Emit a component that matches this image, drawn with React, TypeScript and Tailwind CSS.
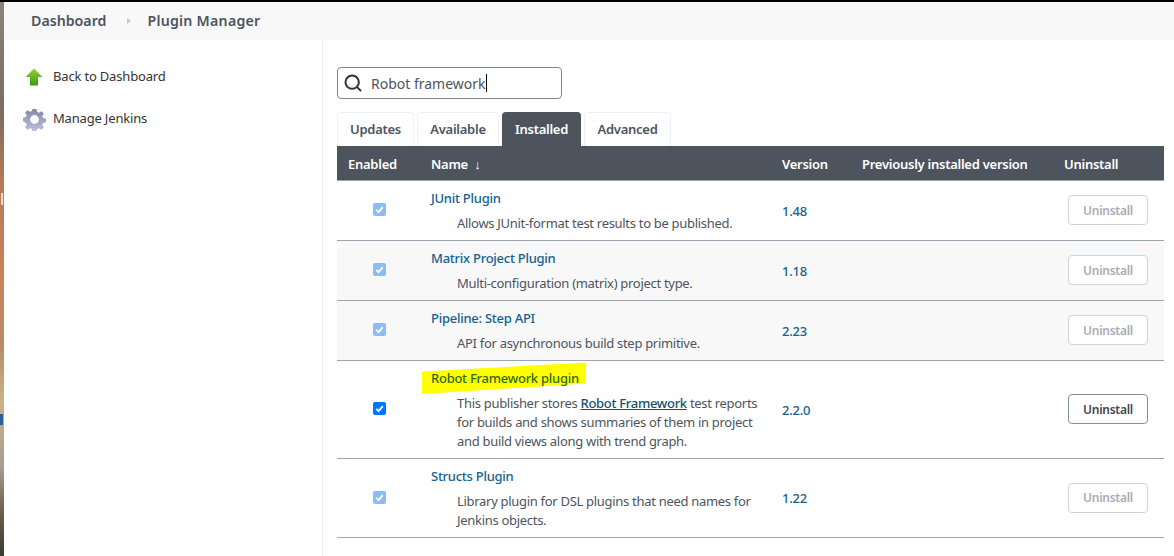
import { Search } from "lucide-react";

type Plugin = {
  name: string;
  description: React.ReactNode;
  version: string;
  rowClass: string;
  active?: boolean;
  highlight?: boolean;
  shaded?: boolean;
};

const plugins: Plugin[] = [
  {
    name: "JUnit Plugin",
    description: "Allows JUnit-format test results to be published.",
    version: "1.48",
    rowClass: "h-[60px]",
  },
  {
    name: "Matrix Project Plugin",
    description: "Multi-configuration (matrix) project type.",
    version: "1.18",
    rowClass: "h-[60px]",
    shaded: true,
  },
  {
    name: "Pipeline: Step API",
    description: "API for asynchronous build step primitive.",
    version: "2.23",
    rowClass: "h-[60px]",
    shaded: true,
  },
  {
    name: "Robot Framework plugin",
    description: (
      <>
        This publisher stores{" "}
        <span className="font-medium text-[#14506f] underline">Robot Framework</span> test reports
        for builds and shows summaries of them in project and build views along with trend graph.
      </>
    ),
    version: "2.2.0",
    rowClass: "h-[98px]",
    active: true,
    highlight: true,
  },
  {
    name: "Structs Plugin",
    description: "Library plugin for DSL plugins that need names for Jenkins objects.",
    version: "1.22",
    rowClass: "h-[79px]",
  },
];

function CheckBox({ active }: { active?: boolean }) {
  return (
    <div
      className={`flex h-[13px] w-[13px] items-center justify-center rounded-[2px] ${
        active ? "bg-[#0075ff]" : "bg-[#8dbcf5]"
      }`}
    >
      <svg viewBox="0 0 12 12" className="h-[11px] w-[11px]" fill="none">
        <path d="M2.5 6.3 5 8.8 9.6 3.4" stroke="#fff" strokeWidth="2" />
      </svg>
    </div>
  );
}

function GearIcon() {
  return (
    <svg viewBox="0 0 24 24" className="h-[23px] w-[23px]">
      <defs>
        <linearGradient id="gear" x1="0" y1="0" x2="0" y2="1">
          <stop offset="0" stopColor="#8286ac" />
          <stop offset="1" stopColor="#c0c1da" />
        </linearGradient>
      </defs>
      <path
        fill="url(#gear)"
        fillRule="evenodd"
        d="M10 1h4l.7 3 2 .9 2.7-1.600 2.4 2.600-1.700 2.600.8 2 3.100.6v3.800l-3.100.7-.8 2 1.700 2.600-2.400 2.600-2.700-1.600-2 .8-.7 3h-4l-.7-3-2-.8-2.700 1.600-2.400-2.600 1.700-2.600-.8-2L0 13.900v-3.800l3.100-.6.8-2-1.700-2.600 2.400-2.600 2.700 1.600 2-.9L10 1Zm2 6.400a4.600 4.600 0 1 0 0 9.200 4.600 4.600 0 0 0 0-9.200Z"
      />
    </svg>
  );
}

function ArrowUpIcon() {
  return (
    <svg viewBox="0 0 18 18" className="h-[18px] w-[18px]">
      <defs>
        <linearGradient id="arrow" x1="0" y1="0" x2="0" y2="1">
          <stop offset="0" stopColor="#8fd13a" />
          <stop offset="1" stopColor="#3f9a10" />
        </linearGradient>
      </defs>
      <path fill="url(#arrow)" d="M9 .5 17.500 9H13v8.500H5V9H.5L9 .5Z" />
    </svg>
  );
}

function PluginRow({ plugin }: { plugin: Plugin }) {
  return (
    <tr className={`border-b border-[#9aa7b0] ${plugin.rowClass} ${plugin.shaded ? "bg-[#f8f8f8]" : ""}`}>
      <td className="p-0 align-middle">
        <div className="flex justify-center pb-[1px] pl-[2px]">
          <CheckBox active={plugin.active} />
        </div>
      </td>
      <td className="relative px-[11px] pb-[7px] pt-[8px] align-top">
        {plugin.highlight && (
          <svg viewBox="0 0 164 32" className="absolute left-[2px] top-[1px] h-[32px] w-[164px]">
            <polygon fill="#ffff00" points="0,9.500 164,0.500 164,21.500 0,32" />
          </svg>
        )}
        <div className="relative font-medium leading-[19px] text-[#14618f]">
          {plugin.highlight ? <span className="text-[#2f6a00]">{plugin.name}</span> : plugin.name}
        </div>
        <div className="mt-[6px] pl-[26px] pr-[4px] leading-[19px] tracking-[-0.3px] text-[#4d545d]">{plugin.description}</div>
      </td>
      <td className="px-0 pt-[3px] align-middle font-medium text-[#14618f]">{plugin.version}</td>
      <td />
      <td className="p-0 align-middle">
        <button
          className={`ml-[4px] block h-[30px] w-[80px] rounded-[4px] border bg-white pt-[1px] text-[12px] font-semibold ${
            plugin.active ? "border-[#7f909c] text-[#3f4650]" : "border-[#ced4da] text-[#a9adb2]"
          }`}
        >
          Uninstall
        </button>
      </td>
    </tr>
  );
}

export default function App() {
  return (
    <div className="flex h-[556px] w-[1174px] flex-col overflow-hidden bg-white font-['Noto_Sans',sans-serif] text-[13px] text-[#333]">
      <div className="h-[2px] shrink-0 bg-black" />
      <div className="flex min-h-0 flex-1">
        <div className="relative w-[4px] shrink-0 bg-[linear-gradient(180deg,#8a8479_0%,#7d6b60_20%,#b77a55_32%,#c9835a_50%,#b98a66_62%,#c9b487_72%,#a79c94_84%,#6f5f4c_92%,#3a3a33_100%)]">
          <div className="absolute left-[1px] top-[191px] h-[12px] w-[3px] border-r border-[#5a9bd6] bg-[#e8dcc8]" />
          <div className="absolute left-0 top-[412px] h-[11px] w-[3px] bg-[#2a5f9e]" />
        </div>
        <div className="flex min-w-0 flex-1 flex-col">
          <nav className="flex h-[38px] shrink-0 items-center bg-[#f8f8f8] pb-[1px] pl-[27px] text-[14.200px] font-semibold text-[#4d545d]">
            <span>Dashboard</span>
            <span className="ml-[21px] mr-[16px] h-0 w-0 border-y-[3px] border-l-[4px] border-y-transparent border-l-[#c4c8cc]" />
            <span className="tracking-[0.25px]">Plugin Manager</span>
          </nav>
          <div className="flex min-h-0 flex-1">
            <aside className="w-[319px] shrink-0 border-r border-[#e9eef0] pl-[19px] pt-[26px] tracking-[-0.18px] text-[#333]">
              <div className="flex h-[22px] items-center">
                <div className="flex w-[30px] justify-start pl-[2px]">
                  <ArrowUpIcon />
                </div>
                <span>Back to Dashboard</span>
              </div>
              <div className="mt-[20px] flex h-[22px] items-center">
                <div className="flex w-[30px] justify-start">
                  <GearIcon />
                </div>
                <span>Manage Jenkins</span>
              </div>
            </aside>
            <main className="min-w-0 flex-1 pl-[14px] pr-[10px] pt-[27px] tracking-[-0.26px]">
              <div className="flex h-[32px] w-[225px] items-center rounded-[4px] border border-[#7b8691] pl-[5px] text-[14px] tracking-normal text-[#4d545d]">
                <Search className="h-[20px] w-[20px] text-[#333]" strokeWidth={2.4} />
                <span className="ml-[8px]">Robot framework</span>
                <span className="h-[18px] w-px bg-black" />
              </div>
              <div className="mt-[13px] flex h-[34px] gap-[3px] font-semibold text-[#4d545d]">
                <div className="flex w-[77px] items-center justify-center rounded-t-[4px] border border-b-0 border-[#eef1f3]">Updates</div>
                <div className="flex w-[82px] items-center justify-center rounded-t-[4px] border border-b-0 border-[#eef1f3]">Available</div>
                <div className="flex w-[79px] items-center justify-center rounded-t-[4px] border border-b-0 border-[#4d545d] bg-[#4d545d] text-white">Installed</div>
                <div className="flex w-[87px] items-center justify-center rounded-t-[4px] border border-b-0 border-[#eef1f3]">Advanced</div>
              </div>
              <table className="w-[827px] table-fixed border-collapse">
                <colgroup>
                  <col className="w-[83px]" />
                  <col className="w-[362px]" />
                  <col className="w-[80px]" />
                  <col className="w-[202px]" />
                  <col className="w-[100px]" />
                </colgroup>
                <thead>
                  <tr className="h-[34px] border-b border-[#9aa7b0] bg-[#4d545d] text-left font-semibold text-white">
                    <th className="pl-[11px] pt-[3px] font-semibold">Enabled</th>
                    <th className="pl-[11px] pt-[3px] font-semibold">Name&nbsp;&nbsp;↓</th>
                    <th className="pt-[3px] font-semibold">Version</th>
                    <th className="pt-[3px] font-semibold">Previously installed version</th>
                    <th className="pt-[3px] font-semibold">Uninstall</th>
                  </tr>
                </thead>
                <tbody>
                  {plugins.map((plugin) => (
                    <PluginRow key={plugin.name} plugin={plugin} />
                  ))}
                </tbody>
              </table>
            </main>
          </div>
        </div>
      </div>
    </div>
  );
}
